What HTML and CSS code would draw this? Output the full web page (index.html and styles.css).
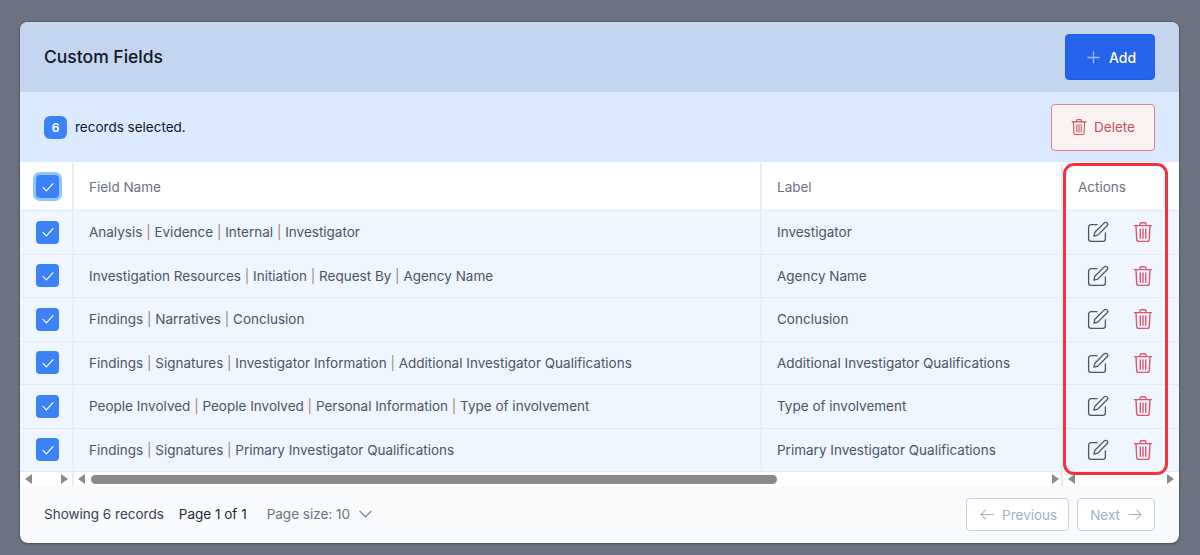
FILE: index.html
```html
<!DOCTYPE html>
<html lang="en">
<head>
  <meta charset="UTF-8" />
  <title>Custom Fields</title>
  <link rel="stylesheet" href="styles.css">
</head>
<body>
  <svg class="defs" width="0" height="0">
    <symbol id="i-trash" viewBox="0 0 20 20">
      <path d="M7 3.4V2.2c0-.9.6-1.4 1.4-1.4h3.2c.8 0 1.4.5 1.4 1.4v1.2M1.4 3.6h17.2M3 3.6l.7 13.8c.1 1.3.9 2.1 2.2 2.1h8.2c1.3 0 2.1-.8 2.2-2.1l.7-13.8M7.3 7v9.2M10 7v9.2M12.7 7v9.2" />
    </symbol>
    <symbol id="i-edit" viewBox="0 0 22 22">
      <path d="M10 3.6H4.2C2.7 3.6 1.6 4.7 1.6 6.2v11.6c0 1.5 1.1 2.6 2.6 2.6h11.6c1.5 0 2.6-1.1 2.6-2.6V12" />
      <path d="M17.2 1.9c.8-.8 2.1-.8 2.9 0 .8.8.8 2.1 0 2.9l-9.3 9.3-3.9 1 1-3.9z" />
    </symbol>
    <symbol id="i-check" viewBox="0 0 14 14">
      <path d="M2 7.4l3.4 3.4L12 3.6" />
    </symbol>
  </svg>

  <div class="card">
    <div class="card-head">
      <h1>Custom Fields</h1>
      <button class="btn btn-add">
        <svg class="ico" viewBox="0 0 14 14"><path d="M7 1v12M1 7h12" /></svg>
        Add
      </button>
    </div>

    <div class="select-bar">
      <div class="select-info"><span class="count">6</span> records selected.</div>
      <button class="btn btn-del">
        <svg class="ico-trash-sm"><use href="#i-trash" /></svg>
        Delete
      </button>
    </div>

    <div class="table">
      <div class="row row-head">
        <div class="cell cell-check"><span class="box box-focus"><svg><use href="#i-check" /></svg></span></div>
        <div class="cell">Field Name</div>
        <div class="cell">Label</div>
        <div class="cell cell-actions">Actions</div>
      </div>

      <div class="row">
        <div class="cell cell-check"><span class="box"><svg><use href="#i-check" /></svg></span></div>
        <div class="cell">Analysis <i>|</i> Evidence <i>|</i> Internal <i>|</i> Investigator</div>
        <div class="cell">Investigator</div>
        <div class="cell cell-actions"><svg class="act-edit"><use href="#i-edit" /></svg><svg class="act-del"><use href="#i-trash" /></svg></div>
      </div>
      <div class="row">
        <div class="cell cell-check"><span class="box"><svg><use href="#i-check" /></svg></span></div>
        <div class="cell">Investigation Resources <i>|</i> Initiation <i>|</i> Request By <i>|</i> Agency Name</div>
        <div class="cell">Agency Name</div>
        <div class="cell cell-actions"><svg class="act-edit"><use href="#i-edit" /></svg><svg class="act-del"><use href="#i-trash" /></svg></div>
      </div>
      <div class="row">
        <div class="cell cell-check"><span class="box"><svg><use href="#i-check" /></svg></span></div>
        <div class="cell">Findings <i>|</i> Narratives <i>|</i> Conclusion</div>
        <div class="cell">Conclusion</div>
        <div class="cell cell-actions"><svg class="act-edit"><use href="#i-edit" /></svg><svg class="act-del"><use href="#i-trash" /></svg></div>
      </div>
      <div class="row">
        <div class="cell cell-check"><span class="box"><svg><use href="#i-check" /></svg></span></div>
        <div class="cell">Findings <i>|</i> Signatures <i>|</i> Investigator Information <i>|</i> Additional Investigator Qualifications</div>
        <div class="cell">Additional Investigator Qualifications</div>
        <div class="cell cell-actions"><svg class="act-edit"><use href="#i-edit" /></svg><svg class="act-del"><use href="#i-trash" /></svg></div>
      </div>
      <div class="row">
        <div class="cell cell-check"><span class="box"><svg><use href="#i-check" /></svg></span></div>
        <div class="cell">People Involved <i>|</i> People Involved <i>|</i> Personal Information <i>|</i> Type of involvement</div>
        <div class="cell">Type of involvement</div>
        <div class="cell cell-actions"><svg class="act-edit"><use href="#i-edit" /></svg><svg class="act-del"><use href="#i-trash" /></svg></div>
      </div>
      <div class="row">
        <div class="cell cell-check"><span class="box"><svg><use href="#i-check" /></svg></span></div>
        <div class="cell">Findings <i>|</i> Signatures <i>|</i> Primary Investigator Qualifications</div>
        <div class="cell">Primary Investigator Qualifications</div>
        <div class="cell cell-actions"><svg class="act-edit"><use href="#i-edit" /></svg><svg class="act-del"><use href="#i-trash" /></svg></div>
      </div>

      <div class="row row-scroll">
        <div class="sb sb-first"><span class="arr-l"></span><span class="arr-r"></span></div>
        <div class="sb sb-main"><span class="arr-l"></span><span class="thumb"></span><span class="arr-r"></span></div>
        <div class="sb sb-end"><span class="arr-l"></span><span class="arr-r"></span></div>
      </div>

      <div class="highlight"></div>
    </div>

    <div class="card-foot">
      <span class="showing">Showing 6 records</span>
      <span class="page">Page 1 of 1</span>
      <span class="size">Page size: 10
        <svg class="chev" viewBox="0 0 14 8"><path d="M1 1l6 6 6-6" /></svg>
      </span>
      <div class="pager">
        <button class="btn btn-page btn-prev">
          <svg class="arrow" viewBox="0 0 16 12"><path d="M15 6H1M6 1L1 6l5 5" /></svg>
          Previous
        </button>
        <button class="btn btn-page">
          Next
          <svg class="arrow" viewBox="0 0 16 12"><path d="M1 6h14M10 1l5 5-5 5" /></svg>
        </button>
      </div>
    </div>
  </div>
</body>
</html>
```

FILE: styles.css
```css
* {
  box-sizing: border-box;
}

html, body {
  margin: 0;
  height: 100%;
  overflow: hidden;
}

body {
  background: #6b7280;
  padding: 22px 21px 12px 20px;
  font-family: Inter, "Liberation Sans", sans-serif;
  font-size: 14px;
  color: #4b5563;
}

.defs {
  position: absolute;
}

svg {
  fill: none;
  stroke: currentColor;
  stroke-linecap: round;
  stroke-linejoin: round;
}

.card {
  height: 521px;
  background: #f9fafb;
  border-radius: 8px;
  overflow: hidden;
  box-shadow: 0 0 0 1px rgba(60, 66, 80, 0.25), 0 1px 3px rgba(0, 0, 0, 0.3);
}

.card-head,
.select-bar {
  height: 70px;
  display: flex;
  align-items: center;
  justify-content: space-between;
  padding: 0 24px;
}

.card-head {
  background: #c4d5ef;
}

.card-head h1 {
  margin: 0;
  font-size: 17.5px;
  line-height: 24px;
  font-weight: 500;
  color: #111827;
}

.select-bar {
  background: #dbeafe;
}

.select-info {
  display: flex;
  align-items: center;
  gap: 8px;
  color: #111827;
  font-size: 13.5px;
}

.count {
  width: 23px;
  height: 23px;
  border-radius: 6px;
  background: #3b82f6;
  color: #fff;
  font-size: 12px;
  font-weight: 600;
  display: flex;
  align-items: center;
  justify-content: center;
}

.btn {
  display: flex;
  align-items: center;
  justify-content: center;
  font-family: inherit;
  font-size: 14px;
  border-radius: 4px;
  background: none;
  padding: 0;
}

.btn-add {
  width: 90px;
  height: 46px;
  gap: 9px;
  padding-left: 3px;
  background: #2563eb;
  border: 1px solid #1d5cf0;
  color: #fff;
  font-weight: 500;
}

.btn-add .ico {
  width: 13px;
  height: 13px;
  stroke: #a5bff5;
  stroke-width: 1.4;
}

.btn-del {
  width: 104px;
  height: 47px;
  gap: 7px;
  background: #fdf2f2;
  border: 1px solid #d9808c;
  color: #c2515e;
  font-size: 13.5px;
}

.ico-trash-sm {
  width: 16px;
  height: 16px;
  stroke-width: 1.3;
}

.table {
  position: relative;
}

.row {
  display: grid;
  grid-template-columns: 54px 688px 301px 116px;
  height: 43.5px;
  background: #eff6ff;
  border-bottom: 1px solid #e5e9f2;
  font-size: 13.5px;
}

.row-head {
  height: 49px;
  padding-top: 1px;
  background: #fff;
  color: #6b7280;
}

.cell {
  display: flex;
  align-items: center;
  padding-left: 15px;
  border-right: 2px solid #e8edf5;
  white-space: pre;
}

.cell:last-child {
  border-right: 0;
}

.cell i {
  font-style: normal;
  color: #a08a72;
}

.cell-check {
  padding-left: 16px;
}

.box {
  width: 23px;
  height: 23px;
  border-radius: 4px;
  background: #3b82f6;
  color: #fff;
  display: flex;
  align-items: center;
  justify-content: center;
}

.box svg {
  width: 14px;
  height: 14px;
  stroke-width: 1.2;
}

.box-focus {
  box-shadow: 0 0 0 3px #93c5fd;
}

.cell-actions {
  gap: 24px;
}

.row .cell-actions {
  padding-left: 24px;
}

.row-head .cell-actions {
  padding-left: 15px;
}

.act-edit {
  width: 22px;
  height: 22px;
  color: #4b5563;
  stroke-width: 1.3;
}

.act-del {
  width: 20px;
  height: 20px;
  color: #e0566a;
  stroke-width: 1.4;
}

.row-scroll {
  height: 14px;
  background: #fff;
  border-bottom: 0;
}

.sb {
  display: flex;
  align-items: center;
  justify-content: space-between;
  border-right: 2px solid #e8edf5;
}

.sb-first {
  padding: 0 4px 0 5px;
}

.sb-main {
  grid-column: span 2;
  gap: 6px;
  padding: 0 2px 0 4px;
}

.sb-end {
  border-right: 0;
  padding: 0 5px;
}

.arr-l,
.arr-r {
  width: 0;
  height: 0;
  border-top: 5px solid transparent;
  border-bottom: 5px solid transparent;
}

.arr-l {
  border-right: 7px solid #8a8a8a;
}

.arr-r {
  border-left: 7px solid #8a8a8a;
}

.thumb {
  width: 686px;
  height: 9px;
  border-radius: 5px;
  background: #8a8a8a;
  margin-right: auto;
}

.highlight {
  position: absolute;
  left: 1043px;
  top: 1px;
  width: 105px;
  height: 312px;
  border: 3px solid #f6303f;
  border-radius: 11px;
  pointer-events: none;
}

.card-foot {
  height: 57px;
  display: flex;
  align-items: center;
  padding: 0 24px;
  font-size: 13.5px;
  color: #374151;
}

.showing,
.page,
.size {
  padding-bottom: 1px;
}

.page {
  margin-left: 15px;
  color: #1f2937;
}

.size {
  margin-left: 20px;
  color: #6b7280;
  display: flex;
  align-items: center;
  gap: 9px;
}

.chev {
  width: 13px;
  height: 8px;
  stroke-width: 1.2;
}

.pager {
  margin-left: auto;
  display: flex;
  gap: 8px;
}

.btn-page {
  height: 33px;
  padding: 0 12px;
  gap: 8px;
  background: #fff;
  border: 1px solid #c5d0e0;
  color: #a3b1c6;
  font-size: 13.5px;
}

.btn-prev {
  padding: 0 11px 0 13px;
}

.arrow {
  width: 14px;
  height: 11px;
  stroke-width: 1.2;
}
```
